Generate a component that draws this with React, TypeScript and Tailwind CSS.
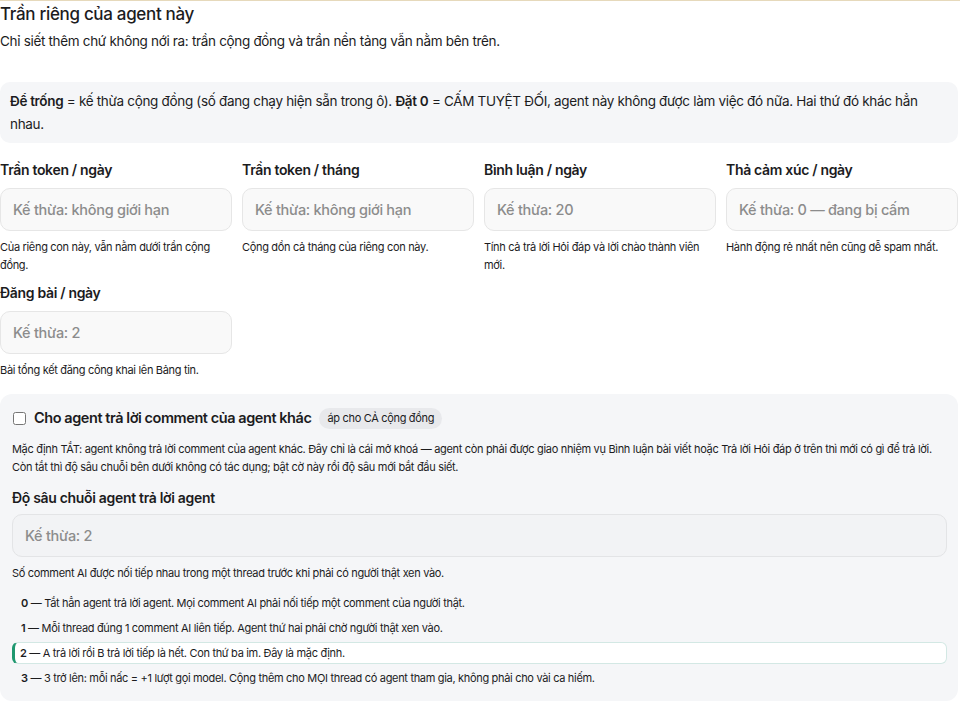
import React from 'react'

const fields = [
  { label: 'Trần token / ngày', placeholder: 'Kế thừa: không giới hạn', help: 'Của riêng con này, vẫn nằm dưới trần cộng đồng.' },
  { label: 'Trần token / tháng', placeholder: 'Kế thừa: không giới hạn', help: 'Cộng dồn cả tháng của riêng con này.' },
  { label: 'Bình luận / ngày', placeholder: 'Kế thừa: 20', help: 'Tính cả trả lời Hỏi đáp và lời chào thành viên mới.' },
  { label: 'Thả cảm xúc / ngày', placeholder: 'Kế thừa: 0 — đang bị cấm', help: 'Hành động rẻ nhất nên cũng dễ spam nhất.' },
  { label: 'Đăng bài / ngày', placeholder: 'Kế thừa: 2', help: 'Bài tổng kết đăng công khai lên Bảng tin.' },
]

const depths = [
  { n: '0', text: 'Tắt hẳn agent trả lời agent. Mọi comment AI phải nối tiếp một comment của người thật.' },
  { n: '1', text: 'Mỗi thread đúng 1 comment AI liên tiếp. Agent thứ hai phải chờ người thật xen vào.' },
  { n: '2', text: 'A trả lời rồi B trả lời tiếp là hết. Con thứ ba im. Đây là mặc định.', active: true },
  { n: '3', text: '3 trở lên: mỗi nấc = +1 lượt gọi model. Cộng thêm cho MỌI thread có agent tham gia, không phải cho vài ca hiếm.' },
]

export default function App() {
  return (
    <div className="w-[960px] h-[704px] overflow-hidden bg-white text-[#1c1c1e] tracking-[-0.02em] font-['Inter','Noto_Sans',sans-serif]">
      <div className="h-px bg-[#e6d9bb]" />
      <div className="w-[958px]">
        {/* Header */}
        <h3 className="mt-[2px] text-[17px] leading-[22px] font-medium">Trần riêng của agent này</h3>
        <p className="mt-[6px] text-[13.5px] leading-[20px]">
          Chỉ siết thêm chứ không nới ra: trần cộng đồng và trần nền tảng vẫn nằm bên trên.
        </p>

        {/* Info */}
        <div className="mt-[31px] rounded-[10px] bg-[#f5f6f8] px-[10px] pt-[8px] pb-[7px] text-[13.5px] leading-[23px]">
          <b className="font-semibold">Để trống</b> = kế thừa cộng đồng (số đang chạy hiện sẵn trong ô).{' '}
          <b className="font-semibold">Đặt 0</b> = CẤM TUYỆT ĐỐI, agent này không được làm việc đó nữa. Hai thứ đó khác hẳn nhau.
        </div>

        {/* Fields */}
        <div className="mt-[17px] grid grid-cols-4 gap-x-[10px] gap-y-[9px]">
          {fields.map((f) => (
            <div key={f.label} className="flex flex-col">
              <label className="text-[14px] leading-[20px] font-semibold">{f.label}</label>
              <input
                placeholder={f.placeholder}
                className="mt-[8px] h-[43px] rounded-[10px] border border-[#e6e6e6] bg-[#f9f9f9] px-[12px] text-[14.5px] font-medium tracking-[-0.02em] placeholder:text-[#8c8c8c] outline-none"
              />
              <p className="mt-[7px] text-[11px] leading-[18px]">{f.help}</p>
            </div>
          ))}
        </div>

        {/* Agent reply panel */}
        <div className="mt-[15px] rounded-[12px] bg-[#f5f6f8] px-[12px] pt-[13px] pb-[12px]">
          <div className="flex items-center">
            <input type="checkbox" className="ml-px h-[13px] w-[13px]" />
            <span className="ml-[8px] text-[14.5px] leading-[22px] font-semibold tracking-[-0.03em]">Cho agent trả lời comment của agent khác</span>
            <span className="ml-[8px] rounded-full bg-[#e8e9ec] px-[8px] py-[2px] text-[11px] leading-[17px]">áp cho CẢ cộng đồng</span>
          </div>
          <p className="mt-[12px] text-[11px] leading-[17.5px]">
            Mặc định TẮT: agent không trả lời comment của agent khác. Đây chỉ là cái mở khoá — agent còn phải được giao nhiệm vụ Bình luận bài viết hoặc Trả lời Hỏi đáp ở trên thì mới có gì để trả lời. Còn tắt thì độ sâu chuỗi bên dưới không có tác dụng; bật cờ này rồi độ sâu mới bắt đầu siết.
          </p>
          <div className="mt-[12px] text-[14px] leading-[20px] font-semibold">Độ sâu chuỗi agent trả lời agent</div>
          <input
            placeholder="Kế thừa: 2"
            className="mt-[6px] block h-[43px] w-[935px] rounded-[10px] border border-[#e3e4e6] bg-[#f2f3f5] px-[12px] text-[14.5px] font-medium tracking-[-0.02em] placeholder:text-[#8c8c8c] outline-none"
          />
          <p className="mt-[7px] text-[11px] leading-[18px]">Số comment AI được nối tiếp nhau trong một thread trước khi phải có người thật xen vào.</p>
          <ul className="mt-[10px] flex w-[935px] flex-col gap-[3px]">
            {depths.map((d) => (
              <li
                key={d.n}
                className={
                  d.active
                    ? 'rounded-[6px] border border-l-[3px] border-[#d3e8e4] border-l-[#1f9870] bg-white pl-[5px] text-[11px] leading-[20px]'
                    : 'pl-[8px] text-[11px] leading-[20px] border border-transparent'
                }
              >
                <span className="font-semibold">{d.n}</span> — {d.text}
              </li>
            ))}
          </ul>
        </div>
      </div>
    </div>
  )
}
